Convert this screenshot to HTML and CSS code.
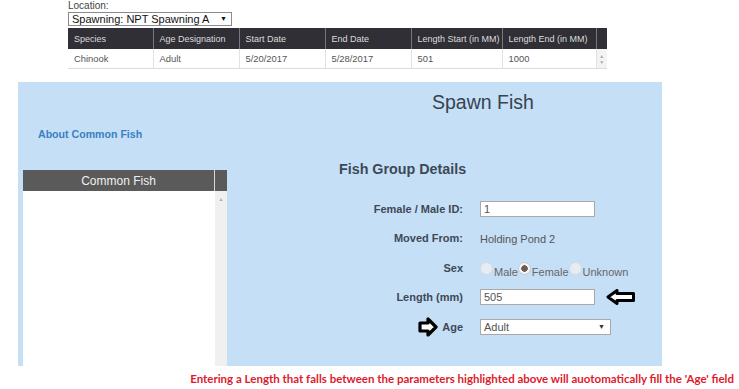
FILE: index.html
```html
<!DOCTYPE html>
<html lang="en">
<head>
  <meta charset="UTF-8" />
  <title>Spawn Fish</title>
  <link rel="stylesheet" href="styles.css">
</head>
<body>
  <div class="top">
    <div class="loc-label">Location:</div>
    <div class="loc-select">Spawning: NPT Spawning A<span class="caret">&#9660;</span></div>

    <table class="ranges">
      <colgroup>
        <col style="width:85px"><col style="width:86px"><col style="width:86px"><col style="width:86px">
        <col style="width:91px"><col style="width:94px"><col style="width:11px">
      </colgroup>
      <thead>
        <tr>
          <th>Species</th>
          <th>Age Designation</th>
          <th>Start Date</th>
          <th>End Date</th>
          <th>Length Start (in MM)</th>
          <th>Length End (in MM)</th>
          <th class="gap"></th>
        </tr>
      </thead>
      <tbody>
        <tr>
          <td>Chinook</td>
          <td>Adult</td>
          <td>5/20/2017</td>
          <td>5/28/2017</td>
          <td>501</td>
          <td>1000</td>
          <td class="spin"><span>&#9650;</span><span>&#9660;</span></td>
        </tr>
      </tbody>
    </table>
  </div>

  <div class="panel">
    <div class="side">
      <a class="about" href="#">About Common Fish</a>
      <div class="fish-list">
        <div class="list-head">
          <span class="list-title">Common Fish</span>
          <span class="list-gap"></span>
        </div>
        <div class="list-body">
          <div class="list-rows"></div>
          <div class="list-scroll"><span>&#9650;</span></div>
        </div>
      </div>
    </div>

    <div class="main">
      <h1>Spawn Fish</h1>
      <h2>Fish Group Details</h2>

      <div class="form">
        <label class="lbl">Female / Male ID:</label>
        <div class="val"><div class="field">1</div></div>

        <label class="lbl">Moved From:</label>
        <div class="val plain">Holding Pond 2</div>

        <label class="lbl">Sex</label>
        <div class="val radios">
          <span class="radio"></span><span class="opt">Male</span>
          <span class="radio on"></span><span class="opt">Female</span>
          <span class="radio"></span><span class="opt">Unknown</span>
        </div>

        <label class="lbl">Length (mm)</label>
        <div class="val">
          <div class="field">505</div>
          <svg class="arrow-left" width="30" height="16" viewBox="0 0 30 16">
            <path d="M2 8 L11 1.5 L11 4.5 L27.5 4.5 L27.5 11.5 L11 11.5 L11 14.5 Z" fill="#fff" stroke="#000" stroke-width="3" stroke-linejoin="round"/>
          </svg>
        </div>

        <label class="lbl">
          <svg class="arrow-right" width="20" height="20" viewBox="0 0 20 20">
            <path d="M18 10 L10 2 L10 6 L2 6 L2 14 L10 14 L10 18 Z" fill="#fff" stroke="#000" stroke-width="3.2" stroke-linejoin="round"/>
          </svg>Age
        </label>
        <div class="val"><div class="field select">Adult<span class="caret">&#9660;</span></div></div>
      </div>
    </div>
  </div>

  <p class="note">Entering a Length that falls between the parameters highlighted above will auotomatically fill the 'Age' field</p>
</body>
</html>
```

FILE: styles.css
```css
html, body {
  margin: 0;
  padding: 0;
  background: #fff;
  font-family: "Liberation Sans", Arial, sans-serif;
  color: #333;
}

body {
  width: 739px;
  height: 389px;
  overflow: hidden;
}

.top {
  padding-left: 68px;
}

.loc-label {
  height: 12px;
  line-height: 12px;
  font-size: 10px;
  color: #444;
}

.loc-select {
  position: relative;
  width: 164px;
  height: 14px;
  box-sizing: border-box;
  border: 1px solid #8a8a8a;
  padding-left: 3px;
  font-size: 11px;
  line-height: 12px;
  color: #111;
}

.loc-select .caret {
  position: absolute;
  right: 4px;
  top: 0;
  font-size: 7px;
}

.ranges {
  margin-top: 2px;
  width: 539px;
  border-collapse: collapse;
  table-layout: fixed;
  font-size: 9.4px;
}

.ranges th {
  height: 21px;
  padding: 0 0 0 6px;
  background: #2f2f35;
  color: #dcdcdc;
  font-weight: normal;
  font-size: 9px;
  text-align: left;
  border-left: 1px solid #77777c;
  white-space: nowrap;
  overflow: hidden;
}

.ranges th:first-child {
  border-left: none;
}

.ranges td {
  height: 19px;
  padding: 0 0 0 6px;
  color: #555;
  border-left: 1px solid #e2e2e2;
  border-bottom: 1px solid #dcdcdc;
}

.ranges td:first-child {
  border-left: none;
}

.ranges .spin {
  padding: 0;
  background: #f3f3f3;
  text-align: center;
  font-size: 5px;
  line-height: 6px;
  color: #aaa;
}

.ranges .spin span {
  display: block;
}

.panel {
  display: flex;
  margin: 13px 0 0 18px;
  width: 644px;
  height: 284px;
  padding-left: 5px;
  box-sizing: border-box;
  background: #c5dff7;
}

.side {
  width: 204px;
  display: flex;
  flex-direction: column;
}

.about {
  margin: 46px 0 0 15px;
  font-size: 10.6px;
  line-height: 13px;
  font-weight: bold;
  color: #3b7fc0;
  text-decoration: none;
}

.fish-list {
  flex: 1;
  margin-top: 29px;
  display: flex;
  flex-direction: column;
}

.list-head {
  display: flex;
  height: 21px;
  background: #5a5a5a;
}

.list-title {
  width: 192px;
  line-height: 22px;
  text-align: center;
  font-size: 12px;
  color: #f0f0f0;
  border-right: 1px solid #d8d8d8;
  box-sizing: border-box;
}

.list-gap {
  flex: 1;
}

.list-body {
  flex: 1;
  display: flex;
  background: #fff;
}

.list-rows {
  width: 192px;
}

.list-scroll {
  flex: 1;
  background: #f0f0f0;
  text-align: center;
  font-size: 5px;
  color: #aaa;
  padding-top: 5px;
}

.main {
  flex: 1;
}

h1 {
  margin: 8px 0 0 205px;
  font-size: 19.5px;
  line-height: 24px;
  font-weight: normal;
  color: #37434f;
}

h2 {
  margin: 46px 0 0 112px;
  font-size: 14.3px;
  line-height: 18px;
  font-weight: bold;
  color: #3d4956;
}

.form {
  display: grid;
  grid-template-columns: 236px 1fr;
  grid-auto-rows: 29.5px;
  column-gap: 17px;
  margin-top: 16px;
}

.lbl {
  display: flex;
  align-items: center;
  justify-content: flex-end;
  font-size: 11px;
  font-weight: bold;
  color: #3d4956;
}

.val {
  display: flex;
  align-items: center;
  font-size: 11px;
  color: #555;
}

.field {
  position: relative;
  width: 115px;
  height: 16px;
  box-sizing: border-box;
  border: 1px solid #a9a9a9;
  background: #fff;
  padding-left: 3px;
  line-height: 14px;
  color: #555;
}

.field.select {
  width: 131px;
}

.field .caret {
  position: absolute;
  right: 5px;
  top: 0;
  font-size: 7px;
  color: #333;
}

.plain {
  padding-top: 2px;
}

.radios {
  padding-top: 9px;
}

.radio {
  width: 13px;
  height: 13px;
  box-sizing: border-box;
  border-radius: 50%;
  background: #e6ecf2;
  border: 1px solid #d4dbe2;
  margin-top: -8px;
  margin-right: 1px;
}

.radio.on {
  background: radial-gradient(circle, #6b5d55 0 3px, #f4f4f4 3.5px);
  border-color: #c8c8c8;
}

.opt {
  color: #666;
  margin-right: 0;
}

.arrow-left {
  margin-left: 11px;
}

.arrow-right {
  margin-right: 4px;
}

.note {
  margin: 6px 5px 0 0;
  text-align: right;
  font-family: Lato, "Liberation Sans", sans-serif;
  font-weight: bold;
  font-size: 11.5px;
  line-height: 14px;
  color: #de1a2e;
}
```
